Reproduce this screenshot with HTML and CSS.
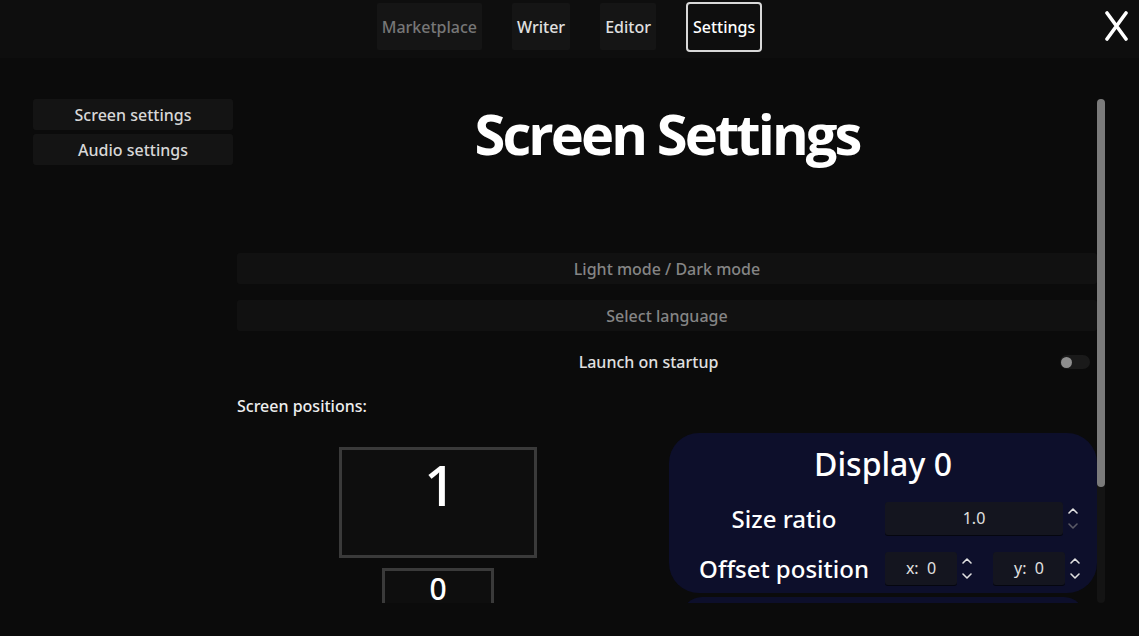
FILE: index.html
```html
<!DOCTYPE html>
<html>
<head>
<meta charset="utf-8">
<link rel="stylesheet" href="styles.css">
</head>
<body>
<div class="app">
  <header class="topbar">
    <nav class="tabs">
      <button class="tab tab-disabled">Marketplace</button>
      <button class="tab">Writer</button>
      <button class="tab">Editor</button>
      <button class="tab tab-active">Settings</button>
    </nav>
    <button class="close" aria-label="Close">
      <svg width="26" height="30" viewBox="0 0 26 30"><path d="M4 2 L23 28 M23 2 L4 28" stroke="#fff" stroke-width="3.6" stroke-linecap="round" fill="none"/></svg>
    </button>
  </header>
  <main class="main">
    <aside class="sidebar">
      <button class="side-btn">Screen settings</button>
      <button class="side-btn">Audio settings</button>
    </aside>
    <section class="content-wrap">
      <div class="content">
        <h1 class="title">Screen Settings</h1>
        <button class="wide-btn">Light mode / Dark mode</button>
        <button class="wide-btn">Select language</button>
        <div class="toggle-row">
          <span class="toggle-label">Launch on startup</span>
          <span class="toggle"><span class="knob"></span></span>
        </div>
        <div class="section-label">Screen positions:</div>
        <div class="positions">
          <div class="screens">
            <div class="screen screen-1">1</div>
            <div class="screen screen-0">0</div>
          </div>
          <div class="panels">
            <div class="panel">
              <div class="panel-title">Display 0</div>
              <div class="panel-row">
                <span class="panel-label">Size ratio</span>
                <div class="spin wide">
                  <span class="field">1.0</span>
                  <span class="arrows">
                    <svg width="12" height="26" viewBox="0 0 12 26"><path d="M2 8 L6 4 L10 8" stroke="#e0e0e0" stroke-width="1.6" fill="none" stroke-linecap="round" stroke-linejoin="round"/><path d="M2 19 L6 23 L10 19" stroke="#5a5a66" stroke-width="1.6" fill="none" stroke-linecap="round" stroke-linejoin="round"/></svg>
                  </span>
                </div>
              </div>
              <div class="panel-row">
                <span class="panel-label">Offset position</span>
                <div class="spin half">
                  <span class="field">x:&nbsp; 0</span>
                  <span class="arrows">
                    <svg width="12" height="26" viewBox="0 0 12 26"><path d="M2 8 L6 4 L10 8" stroke="#e0e0e0" stroke-width="1.6" fill="none" stroke-linecap="round" stroke-linejoin="round"/><path d="M2 19 L6 23 L10 19" stroke="#e0e0e0" stroke-width="1.6" fill="none" stroke-linecap="round" stroke-linejoin="round"/></svg>
                  </span>
                </div>
                <div class="spin half">
                  <span class="field">y:&nbsp; 0</span>
                  <span class="arrows">
                    <svg width="12" height="26" viewBox="0 0 12 26"><path d="M2 8 L6 4 L10 8" stroke="#e0e0e0" stroke-width="1.6" fill="none" stroke-linecap="round" stroke-linejoin="round"/><path d="M2 19 L6 23 L10 19" stroke="#e0e0e0" stroke-width="1.6" fill="none" stroke-linecap="round" stroke-linejoin="round"/></svg>
                  </span>
                </div>
              </div>
            </div>
            <div class="panel panel-next"></div>
          </div>
        </div>
      </div>
      <div class="scrollbar"><div class="thumb"></div></div>
    </section>
  </main>
</div>
</body>
</html>
```

FILE: styles.css
```css
* { box-sizing: border-box; }
html, body { margin: 0; padding: 0; }
body {
  background: #0b0b0b;
  color: #e6e6e6;
  font-family: "Noto Sans", "Open Sans", sans-serif;
  font-weight: 500;
  width: 1139px;
  height: 636px;
  overflow: hidden;
}
button { font-family: inherit; font-weight: inherit; border: none; cursor: pointer; }

.topbar {
  height: 58px;
  background: #0e0e0e;
  display: flex;
  align-items: flex-start;
  justify-content: center;
  position: relative;
}
.tabs {
  display: flex;
  gap: 30px;
  padding-top: 3px;
}
.tab {
  height: 47px;
  padding: 0 5px;
  background: #151515;
  color: #e0e0e0;
  font-size: 16px;
  border-radius: 2px;
}
.tab-disabled { color: #777; }
.tab-active {
  background: #0e0e0e;
  color: #fff;
  border: 2px solid #d8d8d8;
  border-radius: 4px;
  height: 50px;
  margin-top: -1px;
  padding: 0 5px;
}
.close {
  position: absolute;
  right: 10px;
  top: 11px;
  background: transparent;
  padding: 0;
  width: 26px;
  height: 30px;
}

.main {
  display: flex;
  padding-top: 41px;
  height: 545px;
}
.sidebar {
  width: 237px;
  padding-left: 33px;
  padding-right: 4px;
  display: flex;
  flex-direction: column;
  gap: 4px;
}
.side-btn {
  height: 31px;
  background: #141414;
  color: #d8d8d8;
  font-size: 16px;
  border-radius: 3px;
}

.content-wrap {
  display: flex;
  width: 868px;
  height: 504px;
}
.content {
  width: 860px;
  height: 504px;
  overflow: hidden;
}
.scrollbar {
  width: 8px;
  height: 504px;
  background: #141414;
  border-radius: 4px;
}
.thumb {
  height: 388px;
  background: #7b7b7b;
  border-radius: 4px;
}

.title {
  margin: 0;
  height: 154px;
  padding-top: 2px;
  text-align: center;
  font-family: "Open Sans", "Noto Sans", sans-serif;
  font-size: 56px;
  font-weight: 700;
  letter-spacing: -2.9px;
  color: #fff;
  line-height: 64px;
}
.wide-btn {
  display: block;
  width: 860px;
  height: 31px;
  background: #111111;
  color: #858585;
  font-size: 16px;
  border-radius: 3px;
  margin-bottom: 16px;
}
.toggle-row {
  display: flex;
  align-items: center;
  height: 32px;
  margin-top: -1px;
}
.toggle-label {
  flex: 1;
  text-align: center;
  font-size: 16px;
  color: #e0e0e0;
}
.toggle {
  width: 30px;
  height: 14px;
  background: #1a1a1a;
  border-radius: 7px;
  margin-right: 7px;
  display: flex;
  align-items: center;
  padding-left: 1px;
}
.knob {
  width: 11px;
  height: 11px;
  border-radius: 50%;
  background: #8e8e8e;
}
.section-label {
  margin-top: 17px;
  font-size: 16px;
  color: #eeeeee;
  height: 22px;
  line-height: 22px;
}
.positions {
  display: flex;
  margin-top: 16px;
}
.screens {
  width: 432px;
  display: flex;
  flex-direction: column;
  align-items: center;
  padding-top: 14px;
  padding-right: 30px;
  gap: 10px;
}
.screen {
  border: 3px solid #3a3a3a;
  background: #0e0e0e;
  color: #fff;
  text-align: center;
  font-weight: 500;
}
.screen-1 {
  width: 198px;
  height: 111px;
  font-size: 56px;
  line-height: 68px;
  padding-left: 4px;
}
.screen-0 {
  width: 112px;
  height: 56px;
  font-size: 30px;
  line-height: 36px;
}
.panels {
  width: 428px;
  display: flex;
  flex-direction: column;
  align-items: center;
  gap: 4px;
}
.panel {
  width: 428px;
  height: 160px;
  background: #0d0f2b;
  border-radius: 30px;
  padding-top: 10px;
  flex-shrink: 0;
}
.panel-next {
  width: 402px;
  height: 40px;
}
.panel-title {
  text-align: center;
  font-size: 32px;
  line-height: 42px;
  color: #fff;
  margin-bottom: 8px;
  font-weight: 500;
}
.panel-row {
  display: flex;
  align-items: center;
  height: 50px;
  padding-left: 14px;
}
.panel-label {
  width: 202px;
  text-align: center;
  font-size: 24px;
  color: #fff;
  font-weight: 500;
}
.spin {
  display: flex;
  align-items: center;
}
.spin.half { margin-right: 16px; }
.spin.half:last-child { margin-right: 0; }
.field {
  height: 33px;
  background: #14151f;
  border-radius: 3px;
  font-size: 16px;
  font-weight: 400;
  color: #e0e0e0;
  display: flex;
  align-items: center;
  justify-content: center;
  box-shadow: 0 1px 0 #05060f;
}
.wide .field { width: 178px; }
.half .field { width: 72px; }
.arrows {
  width: 20px;
  display: flex;
  justify-content: center;
  align-items: center;
  height: 33px;
}
```
